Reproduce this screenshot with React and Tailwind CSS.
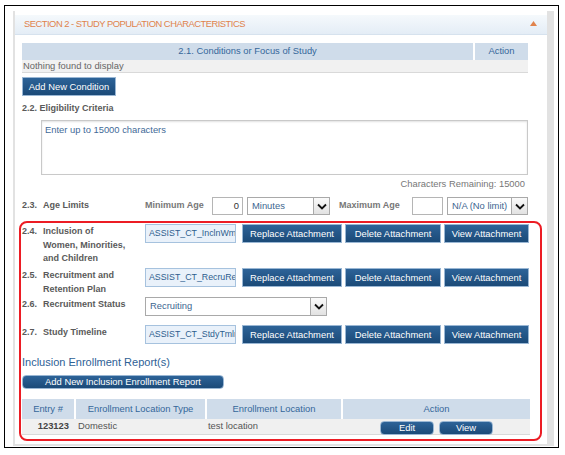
import React from "react";

const font = "font-['Liberation_Sans',Arial,sans-serif]";

const BlueButton = ({ children, className = "" }) => (
  <div
    className={`flex items-center justify-center border border-[#9ab7d4] bg-linear-to-b from-[#2d6398] to-[#1b4a78] text-[9.4px] leading-none text-white whitespace-nowrap ${className}`}
  >
    {children}
  </div>
);

const Chevron = () => (
  <svg width="10" height="7" viewBox="0 0 10 7">
    <path d="M1 1.5 L5 5.5 L9 1.5" fill="none" stroke="#111" strokeWidth="1.8" />
  </svg>
);

const Select = ({ value, className = "" }) => (
  <div className={`flex h-[18px] items-stretch border border-[#a9a9a9] bg-white ${className}`}>
    <div className="flex flex-1 items-center overflow-hidden pl-[4px] text-[9.4px] text-[#3d6690] whitespace-nowrap">
      {value}
    </div>
    <div className="flex w-[16px] items-center justify-center border-l border-[#a9a9a9] bg-linear-to-b from-[#fafafa] to-[#e2e2e2]">
      <Chevron />
    </div>
  </div>
);

// attachment file name, clipped like the original input
const FileBox = ({ name }) => (
  <div className="flex h-[19px] w-[91px] items-center overflow-hidden border border-[#a6c2de] bg-[#e9f1fa] pl-[3px] text-[8.8px] text-[#2e5e8e] whitespace-nowrap">
    {name}
  </div>
);

const Label = ({ num, lines }) => (
  <div className="flex w-[123px] shrink-0 pt-[1px] text-[9px] font-bold leading-[13.5px] text-[#5a5a5a]">
    <span className="w-[21px] shrink-0">{num}</span>
    <div className="flex flex-col whitespace-nowrap">
      {lines.map((l) => (
        <span key={l}>{l}</span>
      ))}
    </div>
  </div>
);

const AttachmentRow = ({ num, lines, file, height }) => (
  <div className={`flex ${height}`}>
    <Label num={num} lines={lines} />
    <div className="flex h-[19px] items-start">
      <FileBox name={file} />
      <BlueButton className="ml-[6px] h-[19px] w-[100px]">Replace Attachment</BlueButton>
      <BlueButton className="ml-[3px] h-[19px] w-[96px]">Delete Attachment</BlueButton>
      <BlueButton className="ml-[3px] h-[19px] w-[85px]">View Attachment</BlueButton>
    </div>
  </div>
);

export default function App() {
  return (
    <div className={`h-[455px] w-[565px] bg-white pl-[4px] pt-[5px] ${font}`}>
      <div className="h-[443px] w-[555px] border border-black">
        <div className="ml-[8px] mt-[5px] h-[435px] w-[541px] border-b-2 border-l-2 border-r-[7px] border-[#e2e2e2] pt-[4px]">
          {/* section header */}
          <div className="flex h-[20px] items-center justify-between border-b border-[#d6e2ee] bg-linear-to-b from-[#f5f9fc] to-[#e4edf6] pl-[9px] pr-[10px]">
            <span className="text-[9.4px] uppercase tracking-[-0.5px] text-[#e0834c]">
              Section 2 - Study Population Characteristics
            </span>
            <svg width="7" height="5" viewBox="0 0 7 5" className="mb-[2px]">
              <path d="M0 5 L3.5 0 L7 5 Z" fill="#e0834c" />
            </svg>
          </div>

          <div className="pl-[7px]">
            {/* 2.1 table */}
            <div className="mt-[8px] w-[506px]">
              <div className="flex h-[17px] bg-[#cfdcea] text-[9.4px] text-[#35679a]">
                <div className="flex flex-1 items-center justify-center border-r-2 border-white">
                  2.1. Conditions or Focus of Study
                </div>
                <div className="flex w-[53px] items-center justify-center">Action</div>
              </div>
              <div className="flex h-[13px] items-center border-b border-[#d9d9d9] bg-[#f1f1f1] pl-[1px] text-[9.4px] text-[#666]">
                Nothing found to display
              </div>
            </div>

            <BlueButton className="mt-[4px] h-[19px] w-[94px]">Add New Condition</BlueButton>

            <div className="mt-[6px] h-[12px] text-[9px] font-bold leading-[12px] text-[#5a5a5a]">
              2.2. Eligibility Criteria
            </div>

            <div className="ml-[19px] mt-[6px] h-[55px] w-[487px] border border-[#c9c9c9] px-[3px] pt-[2px] text-[9.4px] text-[#3f6a98] shadow-[inset_0_1px_2px_rgba(0,0,0,0.12)]">
              Enter up to 15000 characters
            </div>

            <div className="mt-[3px] h-[12px] w-[503px] text-right text-[9.4px] leading-[12px] text-[#777]">
              Characters Remaining: 15000
            </div>

            {/* 2.3 age limits */}
            <div className="mt-[7px] flex h-[18px] items-center">
              <div className="w-[123px] shrink-0 text-[9px] font-bold text-[#5a5a5a]">
                <span className="inline-block w-[21px]">2.3.</span>Age Limits
              </div>
              <div className="w-[67px] text-[9px] font-bold text-[#777]">Minimum Age</div>
              <div className="flex h-[18px] w-[31px] items-center justify-end border border-[#b5b5b5] pr-[3px] text-[9.4px] text-[#333]">
                0
              </div>
              <Select value="Minutes" className="ml-[4px] w-[83px]" />
              <div className="ml-[9px] w-[73px] text-[9px] font-bold text-[#777]">Maximum Age</div>
              <div className="h-[18px] w-[31px] border border-[#b5b5b5]" />
              <Select value="N/A (No limit)" className="ml-[4px] w-[81px]" />
            </div>

            {/* highlighted block */}
            <div className="-ml-[3px] mt-[6px] h-[220px] w-[523px] rounded-[8px] border-2 border-[#ec1c24] pl-[1px] pt-[1px]">
              <AttachmentRow
                num="2.4."
                lines={["Inclusion of", "Women, Minorities,", "and Children"]}
                file="ASSIST_CT_InclnWmn"
                height="h-[44px]"
              />
              <AttachmentRow
                num="2.5."
                lines={["Recruitment and", "Retention Plan"]}
                file="ASSIST_CT_RecruRet"
                height="h-[29px]"
              />
              <div className="flex h-[28px]">
                <Label num="2.6." lines={["Recruitment Status"]} />
                <Select value="Recruiting" className="h-[19px] w-[182px]" />
              </div>
              <AttachmentRow num="2.7." lines={["Study Timeline"]} file="ASSIST_CT_StdyTmln" height="h-[19px]" />

              <div className="mt-[11px] h-[14px] text-[11px] leading-[14px] text-[#2e6196]">
                Inclusion Enrollment Report(s)
              </div>

              <BlueButton className="mt-[6px] h-[14px] w-[202px] rounded-[4px]">
                Add New Inclusion Enrollment Report
              </BlueButton>

              {/* enrollment table */}
              <div className="mt-[10px] w-[508px] text-[9.4px]">
                <div className="flex h-[20px] bg-[#cfdcea] text-[#35679a]">
                  <div className="flex w-[54px] items-center justify-center border-r-2 border-white">Entry #</div>
                  <div className="flex w-[131px] items-center justify-center border-r-2 border-white">
                    Enrollment Location Type
                  </div>
                  <div className="flex w-[136px] items-center justify-center border-r-2 border-white">
                    Enrollment Location
                  </div>
                  <div className="flex flex-1 items-center justify-center">Action</div>
                </div>
                <div className="flex h-[16px] border-b border-[#d9d9d9] bg-[#f0f0f0] text-[#555]">
                  <div className="flex w-[54px] items-center justify-end pr-[7px] font-bold text-[#444]">123123</div>
                  <div className="flex w-[131px] items-center pl-[2px]">Domestic</div>
                  <div className="flex w-[136px] items-center pl-[1px]">test location</div>
                  <div className="flex flex-1 items-start justify-center pt-[2px]">
                    <BlueButton className="h-[14px] w-[54px] rounded-[4px]">Edit</BlueButton>
                    <BlueButton className="ml-[5px] h-[14px] w-[54px] rounded-[4px]">View</BlueButton>
                  </div>
                </div>
              </div>
            </div>
          </div>
        </div>
      </div>
    </div>
  );
}
